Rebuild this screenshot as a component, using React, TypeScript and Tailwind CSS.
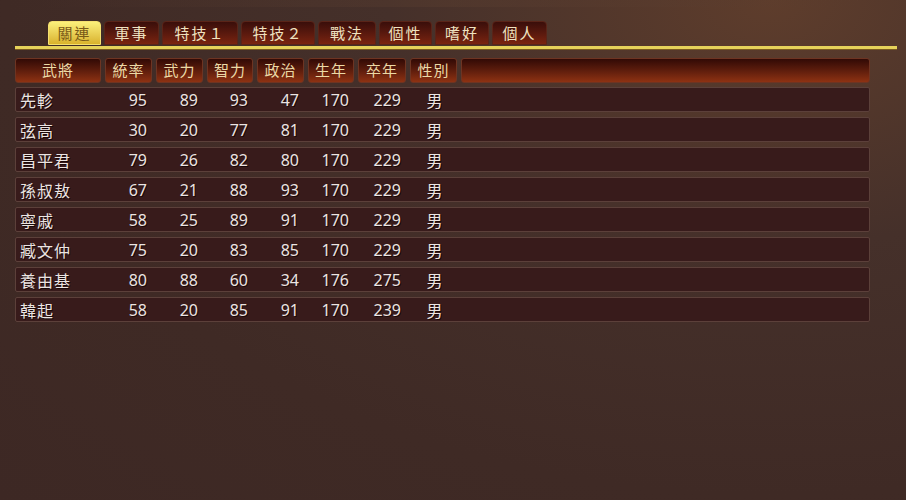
import React from 'react'

const tabs = [
  { label: '關連', w: 'w-[53px]', active: true },
  { label: '軍事', w: 'w-[55px]' },
  { label: '特技１', w: 'w-[76px]' },
  { label: '特技２', w: 'w-[74px]' },
  { label: '戰法', w: 'w-[58px]' },
  { label: '個性', w: 'w-[53px]' },
  { label: '嗜好', w: 'w-[54px]' },
  { label: '個人', w: 'w-[55px]' },
]

// column widths shared by header and rows
const cols = ['w-[86px]', 'w-[47px]', 'w-[47px]', 'w-[46px]', 'w-[47px]', 'w-[46px]', 'w-[48px]', 'w-[47px]']
const headers = ['武將', '統率', '武力', '智力', '政治', '生年', '卒年', '性別']

const officers: [string, number, number, number, number, number, number, string][] = [
  ['先軫', 95, 89, 93, 47, 170, 229, '男'],
  ['弦高', 30, 20, 77, 81, 170, 229, '男'],
  ['昌平君', 79, 26, 82, 80, 170, 229, '男'],
  ['孫叔敖', 67, 21, 88, 93, 170, 229, '男'],
  ['寧戚', 58, 25, 89, 91, 170, 229, '男'],
  ['臧文仲', 75, 20, 83, 85, 170, 229, '男'],
  ['養由基', 80, 88, 60, 34, 176, 275, '男'],
  ['韓起', 58, 20, 85, 91, 170, 239, '男'],
]

const cjk = "font-['Noto_Sans_CJK_TC','Noto_Sans_CJK_SC',sans-serif]"

export default function App() {
  return (
    <div className="w-[906px] h-[500px] overflow-hidden bg-[radial-gradient(ellipse_at_85%_0%,#5e3d2c_0%,#45302a_35%,#3f2a25_70%,#3d2824_100%)]">
      <div className="h-[7px] mx-[40px] bg-gradient-to-r from-[#4a302800] via-[#5a3e3066] to-[#4a302800]" />

      {/* tab strip */}
      <div className="flex gap-[3px] pl-[48px] pt-[14px]">
        {tabs.map((t) => (
          <div
            key={t.label}
            className={`${t.w} h-[24px] flex items-center justify-center rounded-t-[4px] border ${cjk} text-[15px] tracking-[2px] ${
              t.active
                ? 'bg-gradient-to-b from-[#fbf07a] to-[#d9b22a] border-[#f5e070] text-[#7a5a18]'
                : 'bg-gradient-to-b from-[#3a0e0a] to-[#7a2410] border-[#5a2418] text-[#efe2c0]'
            }`}
          >
            {t.label}
          </div>
        ))}
      </div>
      <div className="ml-[15px] mt-[1px] w-[882px] h-[3px] bg-[#e6d25a] shadow-[0_1px_0_#7a5a20]" />

      {/* header */}
      <div className="ml-[15px] mt-[9px] w-[855px] flex gap-[4px]">
        {headers.map((h, i) => (
          <div
            key={h}
            className={`${cols[i]} h-[25px] flex items-center justify-center rounded-[3px] border border-[#6e3422] bg-gradient-to-b from-[#320a06] to-[#8e3212] ${cjk} text-[15px] tracking-[1px] text-[#ecd9a6]`}
          >
            {h}
          </div>
        ))}
        <div className="flex-1 h-[25px] rounded-[3px] border border-[#6e3422] bg-gradient-to-b from-[#320a06] to-[#8e3212]" />
      </div>

      {/* rows */}
      <div className="ml-[15px] mt-[4px] w-[855px] flex flex-col gap-[5px]">
        {officers.map((o) => (
          <div
            key={o[0]}
            className="h-[25px] flex items-center gap-[4px] rounded-[2px] border border-[#5c403a] bg-[#381b1b] text-[#ece4e2] text-[16px]"
          >
            {o.map((v, i) => (
              <div
                key={i}
                className={`${cols[i]} ${
                  i === 0
                    ? `${cjk} pl-[4px] tracking-[1px]`
                    : i === 7
                    ? `${cjk} text-center`
                    : "font-['Noto_Sans',sans-serif] text-right pr-[6px]"
                } [text-shadow:1px_1px_0_#1a0808]`}
              >
                {v}
              </div>
            ))}
          </div>
        ))}
      </div>
    </div>
  )
}
